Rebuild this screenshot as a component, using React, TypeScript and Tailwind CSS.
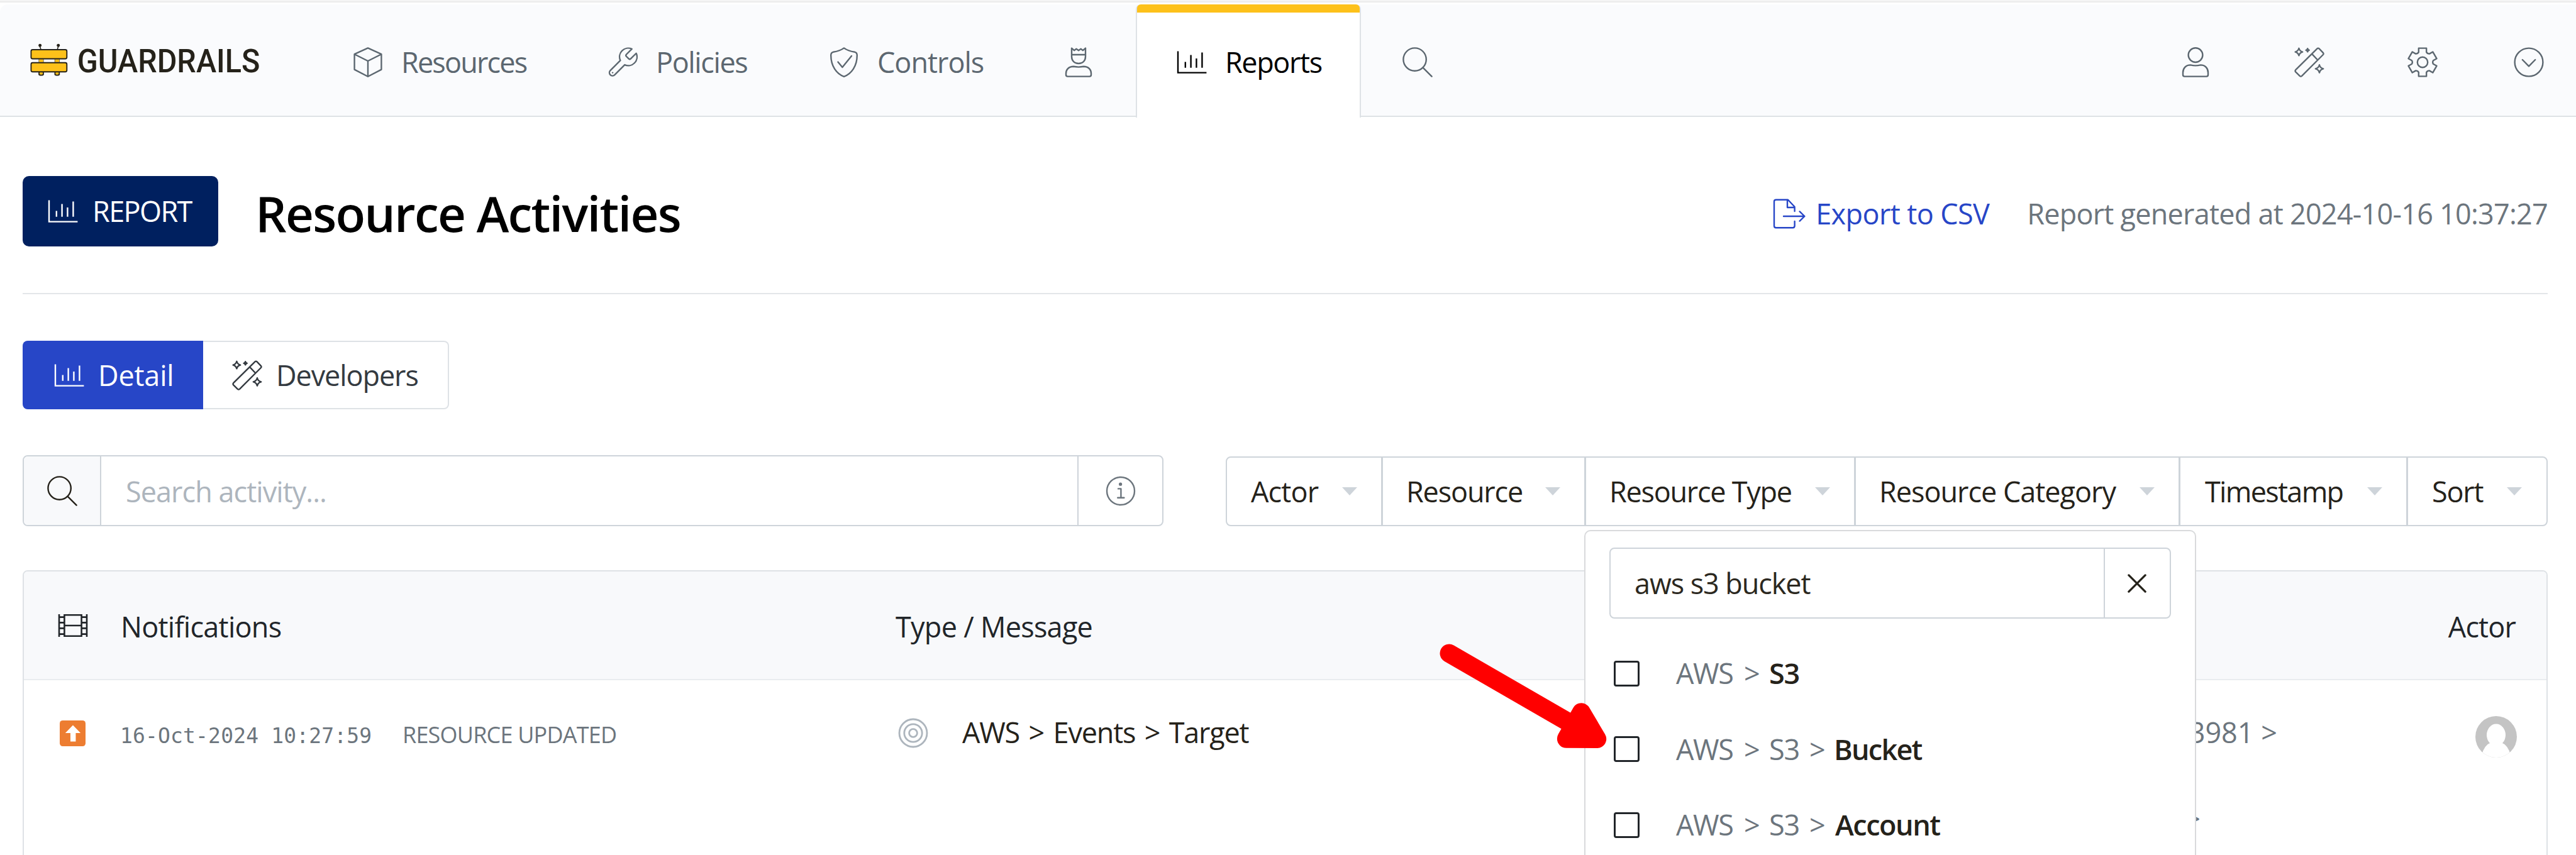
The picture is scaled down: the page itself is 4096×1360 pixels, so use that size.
import React from 'react';

type IconProps = { className?: string; children?: React.ReactNode; box?: string; sw?: number };

function Icon({ className = 'size-[48px]', children, box = '0 0 24 24', sw = 1.2 }: IconProps) {
  return (
    <svg
      viewBox={box}
      className={`shrink-0 ${className}`}
      fill="none"
      stroke="currentColor"
      strokeWidth={sw}
      strokeLinecap="round"
      strokeLinejoin="round"
    >
      {children}
    </svg>
  );
}

const star = (x: number, y: number, r: number) =>
  `M${x} ${y - r}Q${x + r * 0.2} ${y - r * 0.2} ${x + r} ${y}Q${x + r * 0.2} ${y + r * 0.2} ${x} ${y + r}Q${x - r * 0.2} ${y + r * 0.2} ${x - r} ${y}Q${x - r * 0.2} ${y - r * 0.2} ${x} ${y - r}Z`;

const gearPath = (() => {
  const at = (r: number, deg: number) => {
    const a = ((deg - 90) * Math.PI) / 180;
    return `${(12 + r * Math.cos(a)).toFixed(2)} ${(12 + r * Math.sin(a)).toFixed(2)}`;
  };
  let d = '';
  for (let k = 0; k < 6; k++) {
    const c = k * 60;
    d += `${k ? 'L' : 'M'}${at(8.6, c - 21)}L${at(11.6, c - 15.5)}L${at(11.6, c + 15.5)}L${at(8.6, c + 21)}`;
    d += `Q${at(7.7, c + 30)} ${at(8.6, c + 39)}`;
  }
  return d + 'Z';
})();

const BoxIcon = () => (
  <Icon>
    <path d="M12 .7 22.7 5.6V17.8L12 23.4 1.3 17.8V5.6ZM1.3 5.6 12 11l10.700-5.400M12 11v12.400" />
  </Icon>
);
const WrenchIcon = () => (
  <Icon box="1.700 1.300 20.800 20.800" sw={1.05}>
    <path d="M14.700 6.300a1 1 0 0 0 0 1.400l1.600 1.600a1 1 0 0 0 1.400 0l3.770-3.770a6 6 0 0 1-7.940 7.940l-6.910 6.910a2.120 2.120 0 0 1-3-3l6.910-6.910a6 6 0 0 1 7.940-7.940l-3.760 3.760z" />
    <path d="M5.200 18.900h.01" />
  </Icon>
);
const ShieldIcon = () => (
  <Icon>
    <path d="M12 .7Q15 3 20.600 3.900Q22.400 4.300 22.400 6.500C22.400 15 18 21.200 12 23.400C6 21.200 1.600 15 1.600 6.500Q1.600 4.300 3.400 3.900Q9 3 12 .7Z" />
    <path d="M7.200 11.800 10.700 16l7.300-9" />
  </Icon>
);
const torso = 'M8 14.200Q12 15.200 16 14.200C20 14.200 22 17.200 22 20.200V22Q22 23.300 20.700 23.300H3.300Q2 23.300 2 22V20.200C2 17.200 4 14.200 8 14.200Z';
const KingIcon = () => (
  <Icon>
    <path d="M6.500.8 8.500 2.600 10.200 1.400 12 2.600 13.800 1.400 15.500 2.600 17.500.8V7.500C17.500 10.800 15.300 13 12 13S6.500 10.800 6.500 7.500ZM6.500 6H17.500" />
    <path d="M8 15.400Q12 16.200 16 15.400C20 15.400 22 18 22 20.800V22Q22 23.300 20.700 23.300H3.300Q2 23.300 2 22V20.800C2 18 4 15.400 8 15.400Z" />
  </Icon>
);
const UserIcon = () => (
  <Icon>
    <circle cx="12" cy="6.300" r="5.700" />
    <path d={torso} />
  </Icon>
);
const WandIcon = () => (
  <Icon>
    <path d="M18.200 1.200Q19 .4 19.800 1.200L22.900 4.400Q23.600 5.200 22.900 6L6 22.900Q5.200 23.600 4.400 22.900L1.100 19.700Q.4 18.900 1.100 18.100ZM14.200 5.600 18.400 10" />
    <path d={star(3.7, 3.8, 2.9)} />
    <path d={star(10.6, 2.4, 1.3)} />
    <path d={star(20, 17.2, 3.1)} />
  </Icon>
);
const GearIcon = () => (
  <Icon>
    <path d={gearPath} />
    <circle cx="12" cy="12" r="4.100" />
  </Icon>
);
const ChevronCircleIcon = () => (
  <Icon>
    <circle cx="12" cy="12" r="11.200" />
    <path d="M6.900 10 12 15.200 17.100 10" />
  </Icon>
);
const ReportIcon = () => (
  <Icon>
    <path strokeLinecap="butt" strokeLinejoin="miter" d="M1 3.300V20.300H23.700M6.900 16.400V11.700M11.300 16.400V6.300M15.700 16.400V9M20.200 16.400V4.200" />
  </Icon>
);
const SearchIcon = () => (
  <Icon>
    <circle cx="9.800" cy="9.800" r="9.100" />
    <path d="M16.300 16.300 23.300 23.300" />
  </Icon>
);
const InfoIcon = () => (
  <Icon className="size-[48px] text-[#6c757d]">
    <circle cx="12" cy="12" r="11" />
    <circle cx="11.800" cy="6.600" r=".7" fill="currentColor" />
    <path d="M10 10.200H12.200V17.200M9.600 17.400H14.700" />
  </Icon>
);
const FilmIcon = () => (
  <Icon sw={1.3}>
    <path
      strokeLinecap="butt"
      d="M1 3V21M5.200 3V21M18.800 3V21M23 3V21M5.200 3.600H18.800M5.200 20.400H18.800M5.200 12H18.800M1 5.300H5.200M1 9.700H5.200M1 14.200H5.200M1 18.800H5.200M18.800 5.300H23M18.800 9.700H23M18.800 14.200H23M18.800 18.800H23"
    />
  </Icon>
);
const TargetIcon = () => (
  <Icon className="size-[48px] text-[#adb5bd]" sw={1.4}>
    <circle cx="12" cy="12" r="11" />
    <circle cx="12" cy="12" r="7.100" />
    <circle cx="12" cy="12" r="3.200" />
  </Icon>
);
const ExportIcon = () => (
  <Icon className="w-[52px] h-[48px]" box="0 0 26 24">
    <path d="M17.300 10V6.500L12 .9H2.500Q1 .9 1 2.400V21.600Q1 23.100 2.500 23.100H15.800Q17.300 23.100 17.300 21.600V18M11.500 1V7H17.200M8.500 14H25M21.300 10.200 25.200 14 21.300 17.800" />
  </Icon>
);
const CloseIcon = () => (
  <Icon className="size-[30px]" sw={2.6}>
    <path d="M1.500 1.500 22.500 22.500M22.500 1.500 1.500 22.500" />
  </Icon>
);
const Caret = () => <span className="h-0 w-0 border-x-[12.5px] border-t-[13px] border-x-transparent border-t-[#ced4da]" />;

const Logo = () => (
  <svg viewBox="60 20 1230 215" className="w-[380.400px] h-[66.500px] shrink-0">
    <g fill="#25221a">
      <circle cx="117" cy="53" r="8" />
      <circle cx="211" cy="53" r="8" />
      <path d="M115 55 122 75M212 55 206 75" stroke="#25221a" strokeWidth="5" />
    </g>
    <g fill="#fdc11a" stroke="#25221a" strokeWidth="6">
      <path d="M112 120V146M134 120V146M194 120V146M216 120V146" stroke="#8a7a50" strokeWidth="5" />
      <rect x="113" y="120" width="20" height="26" stroke="none" />
      <rect x="195" y="120" width="20" height="26" stroke="none" />
      <path d="M112 186V203Q123 210 134 203V186ZM194 186V203Q205 210 216 203V186Z" />
      <rect x="71" y="75" width="184" height="47" rx="8" />
      <rect x="71" y="142" width="184" height="47" rx="8" />
    </g>
    <text
      x="308"
      y="192"
      textLength="940"
      lengthAdjust="spacingAndGlyphs"
      fontFamily="Roboto, sans-serif"
      fontWeight="500"
      fontSize="169"
      fill="#25221a"
    >
      GUARDRAILS
    </text>
  </svg>
);

const navItem = 'flex h-full items-center gap-[29px] pt-[7px] whitespace-nowrap';

function Header() {
  return (
    <header className="flex h-[179px] items-center rounded-tl-[12px] border-b-2 border-[#dee2e6] bg-[#fafbfd] pl-[46px] pr-[51px] text-[#5c6770]">
      <Logo />
      <nav className="ml-[134.600px] flex h-full">
        <a className={`${navItem} w-[405px]`}>
          <BoxIcon />
          <span className="tracking-[-1.83px]">Resources</span>
        </a>
        <a className={`${navItem} w-[352px]`}>
          <WrenchIcon />
          <span className="tracking-[-1.38px]">Policies</span>
        </a>
        <a className={`${navItem} w-[373px]`}>
          <ShieldIcon />
          <span className="tracking-[-1px]">Controls</span>
        </a>
        <a className={`${navItem} w-[115px]`}>
          <KingIcon />
        </a>
        <a className="relative -mb-[3px] flex w-[358px] flex-col rounded-t-[8px] border-x-2 border-[#dee2e6] bg-white text-black">
          <span className="h-[13px] rounded-t-[6px] bg-[#fdc11a]" />
          <span className="flex h-[158px] items-center gap-[29px] pl-[63px]">
            <ReportIcon />
            <span className="tracking-[-1.4px]">Reports</span>
          </span>
        </a>
        <a className={`${navItem} ml-[66px]`}>
          <SearchIcon />
        </a>
      </nav>
      <div className="ml-auto flex h-full items-center pt-[7px]">
        <UserIcon />
        <span className="ml-[133px] flex"><WandIcon /></span>
        <span className="ml-[132px] flex"><GearIcon /></span>
        <span className="ml-[121px] flex"><ChevronCircleIcon /></span>
      </div>
    </header>
  );
}

const types = [
  { path: ['AWS'], leaf: 'S3', cls: 'tracking-[-1.2px]' },
  { path: ['AWS', 'S3'], leaf: 'Bucket', cls: 'tracking-[-1.74px]' },
  { path: ['AWS', 'S3'], leaf: 'Account', cls: 'pl-[2px] tracking-[-1.47px]' },
];

function TypeDropdown() {
  return (
    <div className="absolute -left-[3px] top-[115px] z-10 flex h-[540px] w-[973px] flex-col rounded-[10px] border-2 border-[#d9dadc] bg-white pl-[38px] pr-[38.500px] pt-[26px] tracking-normal">
      <div className="flex h-[113px] shrink-0 rounded-[8px] border-2 border-[#ced4da]">
        <div className="flex flex-1 items-center pl-[38px] pt-px tracking-[-1.09px] text-[#2b2820]">aws s3 bucket</div>
        <div className="flex w-[105px] items-center justify-center border-l-2 border-[#ced4da] text-[#25221a]">
          <CloseIcon />
        </div>
      </div>
      <div className="mt-[27px] text-[#6c757d]">
        {types.map((t) => (
          <div key={t.leaf} className="flex h-[120.500px] items-center pl-[7px]">
            <span className="size-[41px] shrink-0 rounded-[4px] border-[3px] border-[#212529]" />
            <span className="ml-[58px] w-[108px] tracking-[-1.4px]">{t.path[0]}</span>
            <span className="w-[40px]">&gt;</span>
            {t.path.length > 1 && <span className="w-[64px] tracking-[-1.2px]">{t.path[1]}</span>}
            {t.path.length > 1 && <span className="w-[39px]">&gt;</span>}
            <span className={`font-semibold text-[#25221a] ${t.cls}`}>{t.leaf}</span>
          </div>
        ))}
      </div>
    </div>
  );
}

const filters = [
  { label: 'Actor', cls: 'w-[250px] pl-[40px] tracking-[-0.87px]' },
  { label: 'Resource', cls: 'w-[323px] pl-[37px] tracking-[-1.17px]' },
  { label: 'Resource Type', cls: 'w-[429px] pl-[37px] tracking-[-1.27px]' },
  { label: 'Resource Category', cls: 'w-[516px] pl-[37px] tracking-[-1.01px]' },
  { label: 'Timestamp', cls: 'w-[362px] pl-[39px] tracking-[-1.7px]' },
  { label: 'Sort', cls: 'w-[222px] pl-[38px] tracking-[-1.2px]' },
];

function Filters() {
  return (
    <div className="ml-[99px] flex h-[111px] w-[2102px] rounded-[8px] border-2 border-[#ced4da] text-[#25221a]">
      {filters.map((f) => (
        <div
          key={f.label}
          className={`relative flex shrink-0 items-center border-r-[3px] border-[#ced4da] pr-[38px] first:-ml-[2px] last:-mr-[2px] last:border-r-0 last:pr-[41px] ${f.cls}`}
        >
          <span className="flex-1">{f.label}</span>
          <Caret />
          {f.label === 'Resource Type' && <TypeDropdown />}
        </div>
      ))}
    </div>
  );
}

const Avatar = () => (
  <svg viewBox="0 0 66 66" className="size-[66px]">
    <clipPath id="avatar-disc">
      <circle cx="33" cy="33" r="33" />
    </clipPath>
    <g clipPath="url(#avatar-disc)">
      <rect width="66" height="66" fill="#c4c4c4" />
      <ellipse cx="33" cy="30" rx="15" ry="17.500" fill="#fff" />
      <path d="M25 38V42Q14 46 10 62V66H56V62Q52 46 41 42V38Z" fill="#fff" />
    </g>
  </svg>
);

function ActivityTable() {
  return (
    <section className="mt-[70px] h-[500px] rounded-[8px] border-2 border-[#dee2e6] text-[#212529]">
      <div className="flex h-[173px] items-center rounded-t-[6px] border-b-2 border-[#e9ecef] bg-[#f8f9fb] pl-[54px] pr-[49px]">
        <div className="flex w-[100px]"><FilmIcon /></div>
        <div className="w-[1232px] pt-[4px] tracking-[-0.73px]">Notifications</div>
        <div className="w-[1224px] pt-[4px] tracking-[-0.73px]">Type / Message</div>
        <div className="flex-1 pt-[4px] text-right tracking-[-0.87px]">Actor</div>
      </div>
      <div className="flex h-[168px] items-center pl-[54px] pr-[47px] text-[#6c757d]">
        <div className="w-[99px]">
          <svg viewBox="0 0 44 44" className="ml-[3px] size-[41px]">
            <rect width="44" height="44" rx="5" fill="#ed7d31" />
            <path d="M22.500 8 35.500 21.500H27.300V36H18.200V21.500H9.500Z" fill="#fff" />
          </svg>
        </div>
        <div className="flex w-[1233px] items-center">
          <span className="w-[449px] pt-[9px] font-['DejaVu_Sans_Mono',monospace] text-[33px] tracking-[0.15px]">16-Oct-2024 10:27:59</span>
          <span className="pt-[5px] text-[36px] tracking-[-0.81px]">RESOURCE UPDATED</span>
        </div>
        <div className="flex w-[1226px] items-center pl-[4px]">
          <TargetIcon />
          <span className="ml-[54px] pb-[2px] tracking-[-1.2px] [word-spacing:4px] text-[#25221a]">AWS &gt; Events &gt; Target</span>
        </div>
        <div className="w-[971px] pb-[2px] text-right">3981 &gt;</div>
        <div className="flex flex-1 justify-end pt-[12px]"><Avatar /></div>
      </div>
      <div className="flex h-[103px] w-[3461px] items-center justify-end text-[#6c757d]">&gt;</div>
    </section>
  );
}

const Arrow = () => (
  <svg viewBox="0 0 1260 720" className="absolute left-[2264px] top-[1002px] z-20 w-[390px] h-[223px]">
    <g stroke="#f00" fill="#f00" strokeWidth="95" strokeLinecap="round" strokeLinejoin="round">
      <path d="M130 120 800 507" />
      <path d="M809 423 890 560 732 559Z" />
    </g>
  </svg>
);

export default function App() {
  return (
    <div className="relative h-[1360px] w-[4096px] overflow-hidden bg-white font-['Open_Sans','Noto_Sans',sans-serif] text-[45px] leading-[60px]">
      <div className="h-[2px] bg-[#f5f5f5]" />
      <div className="mb-[3px] h-[2px] bg-[#ebebeb]" />
      <Header />
      <main className="pl-[36px] pr-[45px] pt-[94px]">
        <div className="flex h-[112px] items-center whitespace-nowrap">
          <div className="flex h-full w-[311px] items-center gap-[23px] rounded-[10px] bg-[#00205f] pl-[40px] tracking-[-1.6px] text-white">
            <ReportIcon />
            REPORT
          </div>
          <h1 className="ml-[59px] pt-[6px] text-[78px] font-semibold leading-[100px] tracking-[-1.76px] text-black">Resource Activities</h1>
          <div className="ml-auto flex pt-[7px]">
            <a className="flex w-[404px] items-center gap-[16px] tracking-[-0.6px] text-[#2746c7]">
              <ExportIcon />
              Export to CSV
            </a>
            <span className="tracking-[-0.76px] text-[#6c757d]">Report generated at 2024-10-16 10:37:27</span>
          </div>
        </div>
        <div className="mt-[74px] h-[2px] bg-[#e3e6e9]" />
        <div className="mt-[74px] flex h-[109px]">
          <div className="flex w-[287px] items-center gap-[22px] rounded-l-[8px] bg-[#2746c7] pl-[50px] pt-px tracking-[-0.2px] text-white">
            <ReportIcon />
            Detail
          </div>
          <div className="flex w-[391px] items-center gap-[22px] rounded-r-[8px] border-2 border-l-0 border-[#dee2e6] pl-[46px] pt-px tracking-[-1.1px] text-[#343a40]">
            <WandIcon />
            Developers
          </div>
        </div>
        <div className="mt-[73px] flex h-[113px] items-end whitespace-nowrap">
          <div className="flex h-[113px] w-[1814px] rounded-[8px] border-2 border-[#ced4da]">
            <div className="flex w-[123px] items-center justify-center rounded-l-[6px] border-r-2 border-[#ced4da] bg-[#f8f9fb] text-[#25221a]">
              <SearchIcon />
            </div>
            <div className="flex flex-1 items-center pl-[39px] pt-[3px] tracking-[-0.95px] text-[#adb5bd]">Search activity...</div>
            <div className="flex w-[135px] items-center justify-center border-l-2 border-[#ced4da]">
              <InfoIcon />
            </div>
          </div>
          <Filters />
        </div>
        <ActivityTable />
      </main>
      <Arrow />
    </div>
  );
}
